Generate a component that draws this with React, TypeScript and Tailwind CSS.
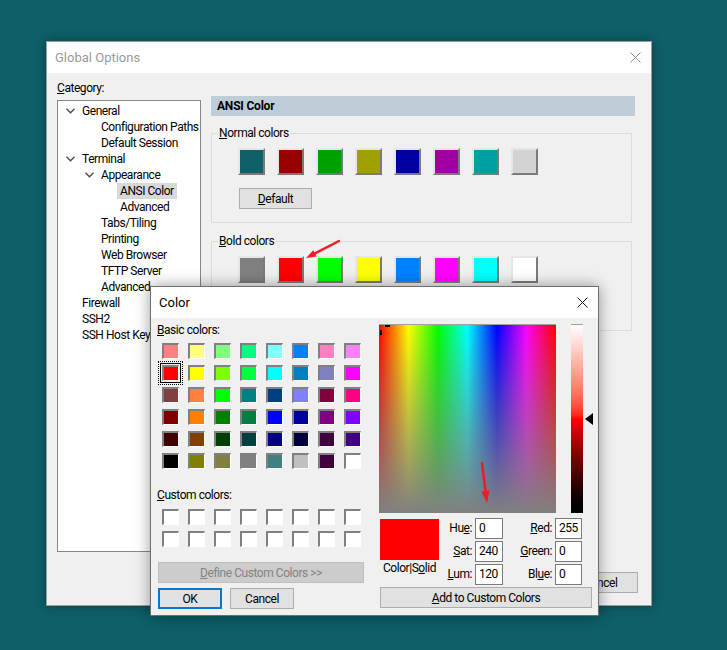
import React from 'react';
import clsx from 'clsx';

const normalColors = ['#0f6068', '#990000', '#00a000', '#a0a000', '#0000a0', '#a000a0', '#00a0a0', '#d3d3d3'];
const boldColors = ['#808080', '#ff0000', '#00ff00', '#ffff00', '#0080ff', '#ff00ff', '#00ffff', '#ffffff'];

const basicColors = [
  ['#ff8080', '#ffff80', '#80ff80', '#00ff80', '#80ffff', '#0080ff', '#ff80c0', '#ff80ff'],
  ['#ff0000', '#ffff00', '#80ff00', '#00ff40', '#00ffff', '#0080c0', '#8080c0', '#ff00ff'],
  ['#804040', '#ff8040', '#00ff00', '#008080', '#004080', '#8080ff', '#800040', '#ff0080'],
  ['#800000', '#ff8000', '#008000', '#008040', '#0000ff', '#0000a0', '#800080', '#8000ff'],
  ['#400000', '#804000', '#004000', '#004040', '#000080', '#000040', '#400040', '#400080'],
  ['#000000', '#808000', '#808040', '#808080', '#408080', '#c0c0c0', '#400040', '#ffffff'],
];

const tree = [
  { label: 'General', level: 0, open: true },
  { label: 'Configuration Paths', level: 1 },
  { label: 'Default Session', level: 1 },
  { label: 'Terminal', level: 0, open: true },
  { label: 'Appearance', level: 1, open: true },
  { label: 'ANSI Color', level: 2, selected: true },
  { label: 'Advanced', level: 2 },
  { label: 'Tabs/Tiling', level: 1 },
  { label: 'Printing', level: 1 },
  { label: 'Web Browser', level: 1 },
  { label: 'TFTP Server', level: 1 },
  { label: 'Advanced', level: 1 },
  { label: 'Firewall', level: 0 },
  { label: 'SSH2', level: 0 },
  { label: 'SSH Host Keys', level: 0 },
];

const indent = ['pl-[5px]', 'pl-[24px]', 'pl-[43px]'];

function CloseX({ color }: { color: string }) {
  return (
    <svg width="11" height="11" viewBox="0 0 11 11">
      <path d="M0.5 0.5 L10.5 10.5 M10.5 0.5 L0.5 10.5" stroke={color} strokeWidth="1" />
    </svg>
  );
}

function Chevron() {
  return (
    <svg width="9" height="6" viewBox="0 0 9 6">
      <path d="M0.5 0.8 L4.5 4.8 L8.5 0.8" fill="none" stroke="#444" strokeWidth="1.3" />
    </svg>
  );
}

function WinButton({ children, className }: { children: React.ReactNode; className?: string }) {
  return (
    <div className={clsx('flex h-[21px] items-center justify-center border border-[#adadad] bg-[#e1e1e1] text-[12px] text-black', className)}>
      {children}
    </div>
  );
}

function ColorGroup({ title, colors }: { title: React.ReactNode; colors: string[] }) {
  return (
    <fieldset className="border border-[#dcdcdc] pb-[13px]">
      <legend className="ml-[6px] px-[1px] text-[12px] leading-[16px]">{title}</legend>
      <div className="flex gap-[12px] pl-[26px] pt-[7px]">
        {colors.map((c, i) => (
          <div
            key={i}
            className="h-[27px] w-[27px] border-2 border-t-[#e6e6e6] border-l-[#e6e6e6] border-r-[#7a7a7a] border-b-[#7a7a7a]"
            style={{ backgroundColor: c }}
          />
        ))}
      </div>
      <WinButton className="ml-[27px] mt-[13px] w-[73px]">
        <span>
          <u>D</u>efault
        </span>
      </WinButton>
    </fieldset>
  );
}

function Swatch({ color, selected }: { color: string; selected?: boolean }) {
  return (
    <div className="relative h-[16px] w-[17px]">
      <div
        className="h-full w-full border-t-2 border-l-2 border-r border-b border-t-[#808080] border-l-[#808080] border-r-white border-b-white"
        style={{ backgroundColor: color }}
      />
      {selected && (
        <>
          <div className="absolute -inset-[2px] border border-black" />
          <div className="absolute -inset-[4px] border border-dotted border-black" />
        </>
      )}
    </div>
  );
}

function ValueField({ label, value }: { label: React.ReactNode; value: string }) {
  return (
    <>
      <span className="text-right text-[12px] leading-[21px]">{label}</span>
      <div className="h-[21px] border border-[#7a7a7a] bg-white pl-[3px] text-[12px] leading-[19px]">{value}</div>
    </>
  );
}

export default function App() {
  return (
    <div className="relative h-[650px] w-[727px] overflow-hidden bg-[#0e5f68] font-['Roboto',sans-serif] tracking-[-0.45px] text-black">
      {/* Global Options window */}
      <div className="absolute left-[46px] top-[41px] flex h-[565px] w-[606px] flex-col border border-[#9c9c9c] bg-[#f0f0f0] shadow-[0_0_10px_rgba(0,0,0,0.35)]">
        <div className="flex h-[31px] shrink-0 items-center justify-between bg-white pl-[8px] pr-[10px]">
          <span className="text-[13px] tracking-normal text-[#9a9a9a]">Global Options</span>
          <CloseX color="#8a8a8a" />
        </div>
        <div className="flex flex-1 flex-col pl-[10px] pr-[16px] pt-[7px]">
          <div className="flex gap-[10px]">
            <div className="flex w-[144px] flex-col">
              <span className="text-[12px] leading-[16px]">
                <u>C</u>ategory:
              </span>
              <div className="mt-[4px] h-[452px] border border-[#828790] bg-white pt-[2px]">
                {tree.map((t, i) => (
                  <div key={i} className={clsx('flex h-[16px] items-center text-[12px]', indent[t.level])}>
                    <span className="flex w-[19px] shrink-0 items-center pl-[3px]">{t.open && <Chevron />}</span>
                    <span className={clsx('-ml-[3px] whitespace-nowrap px-[3px] leading-[16px]', t.selected && 'bg-[#d9d9d9]')}>
                      {t.label}
                    </span>
                  </div>
                ))}
              </div>
            </div>
            <div className="mt-[16px] flex-1">
              <div className="flex h-[20px] items-center bg-[#bfcdd9] pl-[6px] text-[12px] font-bold tracking-[-0.2px]">ANSI Color</div>
              <div className="mt-[9px] mr-[3px] flex flex-col gap-[10px]">
                <ColorGroup
                  title={
                    <>
                      <u>N</u>ormal colors
                    </>
                  }
                  colors={normalColors}
                />
                <ColorGroup
                  title={
                    <>
                      <u>B</u>old colors
                    </>
                  }
                  colors={boldColors}
                />
              </div>
            </div>
          </div>
          <div className="-mr-[3px] mt-[20px] flex justify-end gap-[8px]">
            <WinButton className="w-[75px]">OK</WinButton>
            <WinButton className="w-[75px]">Cancel</WinButton>
          </div>
        </div>
      </div>

      {/* Color dialog */}
      <div className="absolute left-[150px] top-[286px] flex h-[330px] w-[449px] flex-col border border-[#6e6e6e] bg-[#f0f0f0] shadow-[0_0_14px_rgba(0,0,0,0.4)]">
        <div className="flex h-[31px] shrink-0 items-center justify-between bg-white pl-[8px] pr-[10px]">
          <span className="text-[13px] tracking-normal">Color</span>
          <CloseX color="#111" />
        </div>
        <div className="flex gap-[15px] pl-[6px]">
          {/* left column */}
          <div className="flex w-[207px] flex-col pt-[4px]">
            <span className="text-[12px] leading-[16px]">
              <u>B</u>asic colors:
            </span>
            <div className="mt-[5px] grid grid-cols-[repeat(8,26px)] auto-rows-[22px] pl-[5px]">
              {basicColors.flat().map((c, i) => (
                <Swatch key={i} color={c} selected={i === 8} />
              ))}
            </div>
            <span className="mt-[12px] text-[12px] leading-[16px]">
              <u>C</u>ustom colors:
            </span>
            <div className="mt-[6px] grid grid-cols-[repeat(8,26px)] auto-rows-[22px] pl-[5px]">
              {Array.from({ length: 16 }).map((_, i) => (
                <Swatch key={i} color="#ffffff" />
              ))}
            </div>
            <div className="ml-[1px] mt-[9px] flex h-[21px] w-[206px] items-center justify-center border border-[#bfbfbf] bg-[#cccccc] text-[12px] text-[#838383]">
              <span>
                <u>D</u>efine Custom Colors &gt;&gt;
              </span>
            </div>
            <div className="ml-[1px] mt-[5px] flex gap-[8px]">
              <div className="flex h-[21px] w-[64px] items-center justify-center border-2 border-[#0078d7] bg-[#e1e1e1] text-[12px]">OK</div>
              <WinButton className="w-[64px]">Cancel</WinButton>
            </div>
          </div>

          {/* right column */}
          <div className="flex flex-col pt-[6px]">
            <div className="flex items-start">
              <svg width="177" height="189" className="block">
                <defs>
                  <linearGradient id="hue" x1="0" x2="1" y1="0" y2="0">
                    <stop offset="0" stopColor="#ff0000" />
                    <stop offset="0.1667" stopColor="#ffff00" />
                    <stop offset="0.3333" stopColor="#00ff00" />
                    <stop offset="0.5" stopColor="#00ffff" />
                    <stop offset="0.6667" stopColor="#0000ff" />
                    <stop offset="0.8333" stopColor="#ff00ff" />
                    <stop offset="1" stopColor="#ff0000" />
                  </linearGradient>
                  <linearGradient id="sat" x1="0" x2="0" y1="0" y2="1">
                    <stop offset="0" stopColor="#808080" stopOpacity="0" />
                    <stop offset="1" stopColor="#808080" stopOpacity="1" />
                  </linearGradient>
                </defs>
                <rect width="177" height="189" fill="url(#hue)" />
                <rect width="177" height="189" fill="url(#sat)" />
                <rect x="0" y="0" width="177" height="1" fill="#a0a0a0" />
                <rect x="6" y="1" width="5" height="2" fill="#000" />
                <rect x="1" y="6" width="2" height="5" fill="#000" />
              </svg>
              <div className="ml-[15px] h-[189px] w-[12px] border-t border-[#a0a0a0] bg-linear-to-b from-white via-[#ff0000] to-black" />
              <svg width="10" height="14" className="mt-[88px] ml-[1px]">
                <path d="M1 7 L9 1 L9 13 Z" fill="#000" />
              </svg>
            </div>
            <div className="mt-[5px] flex items-start">
              <div className="ml-[1px] flex w-[59px] flex-col items-center">
                <div className="mt-[1px] h-[41px] w-[59px] bg-[#ff0000]" />
                <span className="mt-[1px] whitespace-nowrap text-[12px] leading-[15px]">
                  Color|S<u>o</u>lid
                </span>
              </div>
              <div className="grid grid-cols-[33px_28px_46px_27px] gap-x-[3px] gap-y-[2px]">
                <ValueField
                  label={
                    <>
                      Hu<u>e</u>:
                    </>
                  }
                  value="0"
                />
                <ValueField
                  label={
                    <>
                      <u>R</u>ed:
                    </>
                  }
                  value="255"
                />
                <ValueField
                  label={
                    <>
                      <u>S</u>at:
                    </>
                  }
                  value="240"
                />
                <ValueField
                  label={
                    <>
                      <u>G</u>reen:
                    </>
                  }
                  value="0"
                />
                <ValueField
                  label={
                    <>
                      <u>L</u>um:
                    </>
                  }
                  value="120"
                />
                <ValueField
                  label={
                    <>
                      Bl<u>u</u>e:
                    </>
                  }
                  value="0"
                />
              </div>
            </div>
            <WinButton className="ml-[1px] mt-[2px] w-[212px]">
              <span>
                <u>A</u>dd to Custom Colors
              </span>
            </WinButton>
          </div>
        </div>
      </div>

      {/* annotation arrows */}
      <svg width="727" height="650" className="pointer-events-none absolute inset-0">
        <path d="M339 241 L315 253.4" stroke="#ee1c25" strokeWidth="2.5" strokeLinecap="round" />
        <path d="M306 258 L316.5 256.5 L313.3 250.3 Z" fill="#ee1c25" />
        <path d="M482 463 L485.5 491" stroke="#ee1c25" strokeWidth="2.5" strokeLinecap="round" />
        <path d="M487 503 L489.5 490.6 L481.5 491.6 Z" fill="#ee1c25" />
      </svg>
    </div>
  );
}
